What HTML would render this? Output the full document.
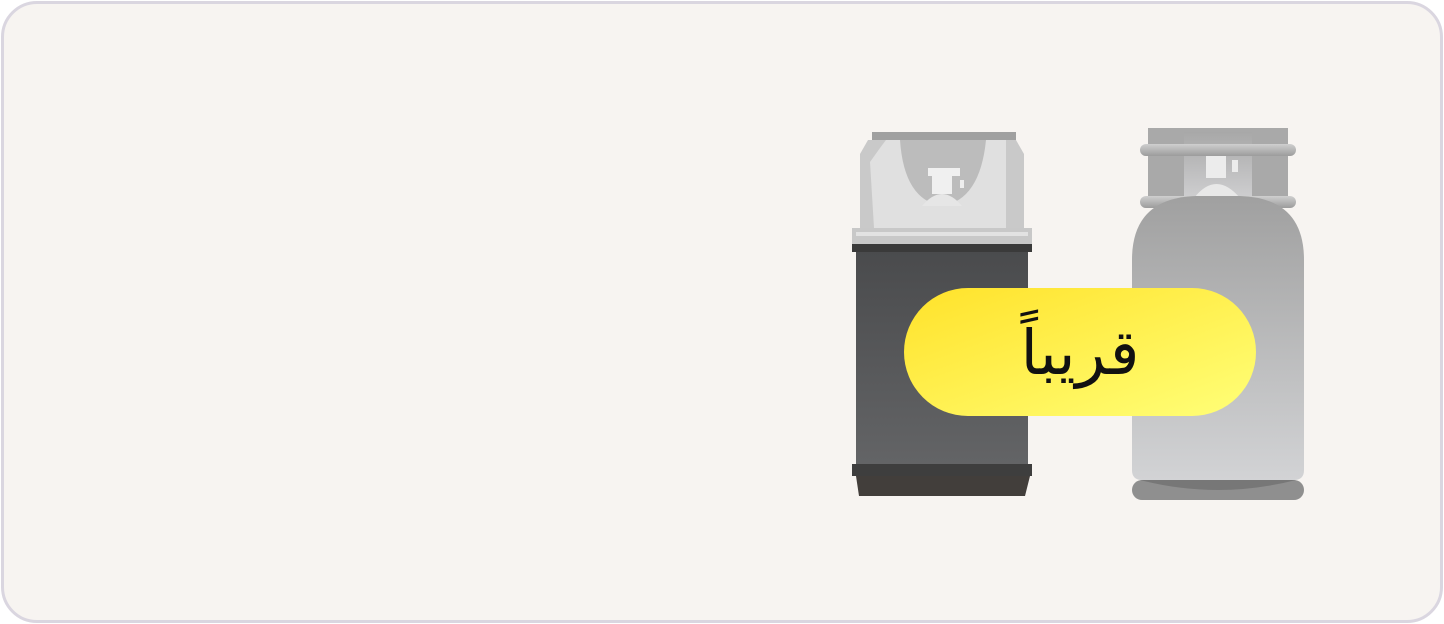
<!DOCTYPE html>
<html><head><meta charset="utf-8"><style>
html,body{margin:0;padding:0;width:1444px;height:624px;background:#fff;overflow:hidden}
.card{position:absolute;left:1px;top:1px;width:1436px;height:616px;border:3px solid #dad6e0;border-radius:36px;background:#f7f4f1}
svg{position:absolute;left:0;top:0}
.pill{position:absolute;left:904px;top:288px;width:352px;height:128px;border-radius:64px;background:linear-gradient(160deg,#ffe22a,#ffff78);display:flex;align-items:center;justify-content:center;font-family:"DejaVu Sans",sans-serif;font-size:62px;color:#111;direction:rtl}
</style></head><body>
<div class="card"></div>
<svg width="1444" height="624">
<defs>
<linearGradient id="d" x1="0" y1="0" x2="0" y2="1"><stop offset="0" stop-color="#4a4b4d"/><stop offset="1" stop-color="#636466"/></linearGradient>
<linearGradient id="g" x1="0" y1="0" x2="0" y2="1"><stop offset="0" stop-color="#a0a0a0"/><stop offset="1" stop-color="#d2d3d5"/></linearGradient>
<linearGradient id="h" x1="0" y1="0" x2="0" y2="1"><stop offset="0" stop-color="#cfcfcf"/><stop offset="1" stop-color="#9c9c9c"/></linearGradient>
<linearGradient id="i" x1="0" y1="0" x2="0" y2="1"><stop offset="0" stop-color="#a8a8a8"/><stop offset="1" stop-color="#d4d4d6"/></linearGradient>
</defs>
<!-- left cylinder -->
<rect x="872" y="132" width="144" height="8" fill="#a0a0a0"/>
<path d="M868 140 H1016 L1024 154 V228 H860 V154 Z" fill="#c9c9c9"/>
<path d="M880 148 L870 162 L874 228 H1006 V140 H886 Z" fill="#e0e0e0"/>
<path d="M900 140 Q904 200 942 206 Q980 200 986 140 Z" fill="#bcbcbc"/>
<rect x="928" y="168" width="32" height="8" fill="#f0f0f0"/>
<rect x="932" y="176" width="20" height="18" fill="#f0f0f0"/>
<rect x="960" y="180" width="4" height="8" fill="#eee"/>
<path d="M922 206 Q942 182 962 206 Z" fill="#e6e6e6"/>
<rect x="852" y="228" width="180" height="16" fill="#c8c8c8"/>
<rect x="856" y="232" width="172" height="4" fill="#e2e2e2"/>
<rect x="852" y="244" width="180" height="8" fill="#3a3a3a"/>
<rect x="856" y="252" width="172" height="212" fill="url(#d)"/>
<rect x="852" y="464" width="180" height="12" fill="#3e3e3e"/>
<path d="M856 476 H1030 L1025 496 H859 Z" fill="#423e3b"/>
<!-- right cylinder -->
<rect x="1148" y="128" width="140" height="80" fill="#a9a9a9"/>
<rect x="1184" y="132" width="68" height="76" fill="url(#i)"/>
<rect x="1200" y="148" width="32" height="8" fill="#ececec"/>
<rect x="1206" y="156" width="20" height="22" fill="#ececec"/>
<rect x="1232" y="160" width="6" height="12" fill="#ececec"/>
<path d="M1194 198 Q1216 170 1240 198 Z" fill="#e8e8e8"/>
<rect x="1140" y="144" width="156" height="12" rx="6" fill="url(#h)"/>
<rect x="1140" y="196" width="156" height="12" rx="6" fill="url(#h)"/>
<path d="M1132 260 Q1132 198 1196 196 H1240 Q1304 198 1304 260 V470 Q1304 480 1294 480 H1142 Q1132 480 1132 470 Z" fill="url(#g)"/>
<rect x="1132" y="480" width="172" height="20" rx="10" fill="#8f8f8f"/>
<path d="M1140 480 Q1218 500 1296 480 Z" fill="#777"/>
</svg>
<div class="pill">قريباً</div>
</body></html>
